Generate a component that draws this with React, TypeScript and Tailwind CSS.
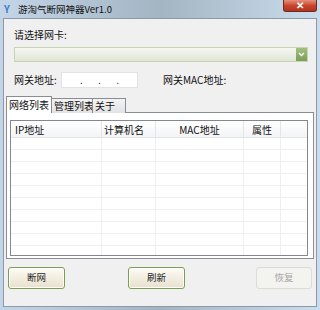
import React from 'react'

const font = { fontFamily: '"Noto Sans CJK SC", "Liberation Sans", sans-serif' }

function FlatButton({ label, disabled, className = '' }: { label: string; disabled?: boolean; className?: string }) {
  return (
    <button
      className={
        (disabled
          ? 'w-[56px] h-[22px] rounded-[3px] border border-[#dcdcd4] bg-[#f3f3ef] text-[9.5px] text-[#a8a8a8] leading-none'
          : 'w-[57px] h-[22px] rounded-[3px] border border-[#7a9e55] bg-gradient-to-b from-[#fdfbf6] to-[#e9e0cd] text-[9.5px] text-[#1e1e1e] leading-none shadow-[inset_0_0_0_1px_#fffdf8]') +
        ' ' +
        className
      }
    >
      {label}
    </button>
  )
}

export default function App() {
  const rows = Array.from({ length: 10 })
  const tabs = [
    { t: '网络列表', w: 'w-[46px]' },
    { t: '管理列表', w: 'w-[42px]' },
    { t: '关于', w: 'w-[34px]' },
  ]

  return (
    <div
      className="w-[320px] h-[310px] flex flex-col overflow-hidden bg-gradient-to-r from-[#c3d5e7] via-[#a3b4c3] to-[#cbdcec]"
      style={font}
    >
      {/* title bar */}
      <div className="h-[18px] flex items-start relative">
        <div className="ml-[4px] mt-[3px] w-[9px] h-[11px] text-[#3b7fd0] text-[10px] leading-[11px] font-bold">Y</div>
        <div className="ml-[5px] mt-[2px] text-[9.5px] leading-[14px] text-[#111]">游淘气断网神器Ver1.0</div>
        <div className="absolute right-[3px] top-0 w-[34px] h-[12px] rounded-b-[3px] border border-[#6e2a20] border-t-0 bg-gradient-to-b from-[#e4907c] via-[#c9452d] to-[#b33320] flex items-center justify-center">
          <span className="text-white text-[10px] leading-none font-bold" style={{ fontFamily: '"Liberation Sans", sans-serif' }}>✕</span>
        </div>
      </div>

      {/* client area */}
      <div className="flex-1 mx-[3px] mb-[3px] bg-[#f0f0f0] border border-[#8b9aa8] flex flex-col">
        <div className="ml-[10px] mt-[9px] text-[10px] leading-[14px] text-[#111]">请选择网卡:</div>

        {/* combo */}
        <div className="ml-[10px] mt-[5px] w-[294px] h-[15px] border border-[#c6d6b2] bg-gradient-to-b from-[#f6f8f1] to-[#dfe6d6] flex justify-end">
          <div className="w-[11px] h-full bg-gradient-to-b from-[#a2c07e] to-[#7c9e58] flex items-center justify-center">
            <svg width="7" height="5" viewBox="0 0 7 5">
              <path d="M1 1 L3.5 3.5 L6 1" stroke="#fff" strokeWidth="1.4" fill="none" />
            </svg>
          </div>
        </div>

        {/* gateway row */}
        <div className="mt-[10px] flex items-center h-[16px]">
          <div className="ml-[10px] w-[44px] text-[10px] leading-[14px] text-[#111]">网关地址:</div>
          <div className="ml-[3px] w-[77px] h-[16px] bg-white border border-[#e2e3ea] flex items-center justify-around px-[10px] text-[9px] leading-none text-[#333]">
            <span>.</span>
            <span>.</span>
            <span>.</span>
          </div>
          <div className="ml-[25px] text-[10px] leading-[14px] text-[#111]">网关MAC地址:</div>
        </div>

        {/* tabs */}
        <div className="mt-[8px] ml-[2px] flex items-end h-[17px] relative z-10">
          {tabs.map((tab, i) => (
            <div
              key={tab.t}
              className={
                i === 0
                  ? tab.w + ' h-[17px] pl-[2px] whitespace-nowrap bg-white border border-[#898c95] border-b-0 text-[10px] leading-[16px] text-[#111]'
                  : tab.w + ' h-[15px] pl-[2px] -ml-px whitespace-nowrap bg-gradient-to-b from-[#f3f3f3] to-[#e2e2e2] border border-[#898c95] border-b-0 text-[10px] leading-[14px] text-[#111]'
              }
            >
              {tab.t}
            </div>
          ))}
        </div>

        {/* panel */}
        <div className="ml-[2px] w-[308px] h-[147px] -mt-px bg-white border border-[#898c95] pt-[7px] pl-[3px]">
          <div className="w-[298px] h-[136px] border border-[#828790] overflow-hidden flex flex-col">
            <div className="flex h-[17px] border-b border-[#e5e5e5] bg-gradient-to-b from-white to-[#f3f4f6] text-[10px] leading-[17px] text-[#111]">
              <div className="w-[91px] pl-[4px] border-r border-[#e5e5e5]">IP地址</div>
              <div className="w-[54px] pl-[2px] border-r border-[#e5e5e5]">计算机名</div>
              <div className="w-[88px] text-center border-r border-[#e5e5e5]">MAC地址</div>
              <div className="w-[37px] text-center border-r border-[#e5e5e5]">属性</div>
              <div className="flex-1" />
            </div>
            {rows.map((_, i) => (
              <div key={i} className="flex h-[12px] border-b border-[#efefef] shrink-0">
                <div className="w-[91px] border-r border-[#efefef]" />
                <div className="w-[54px] border-r border-[#efefef]" />
                <div className="w-[88px] border-r border-[#efefef]" />
                <div className="w-[37px] border-r border-[#efefef]" />
                <div className="flex-1" />
              </div>
            ))}
          </div>
        </div>

        {/* buttons */}
        <div className="mt-[8px] ml-[4px] flex items-center">
          <FlatButton label="断网" />
          <FlatButton label="刷新" className="ml-[63px]" />
          <FlatButton label="恢复" disabled className="ml-[71px]" />
        </div>
      </div>
    </div>
  )
}
